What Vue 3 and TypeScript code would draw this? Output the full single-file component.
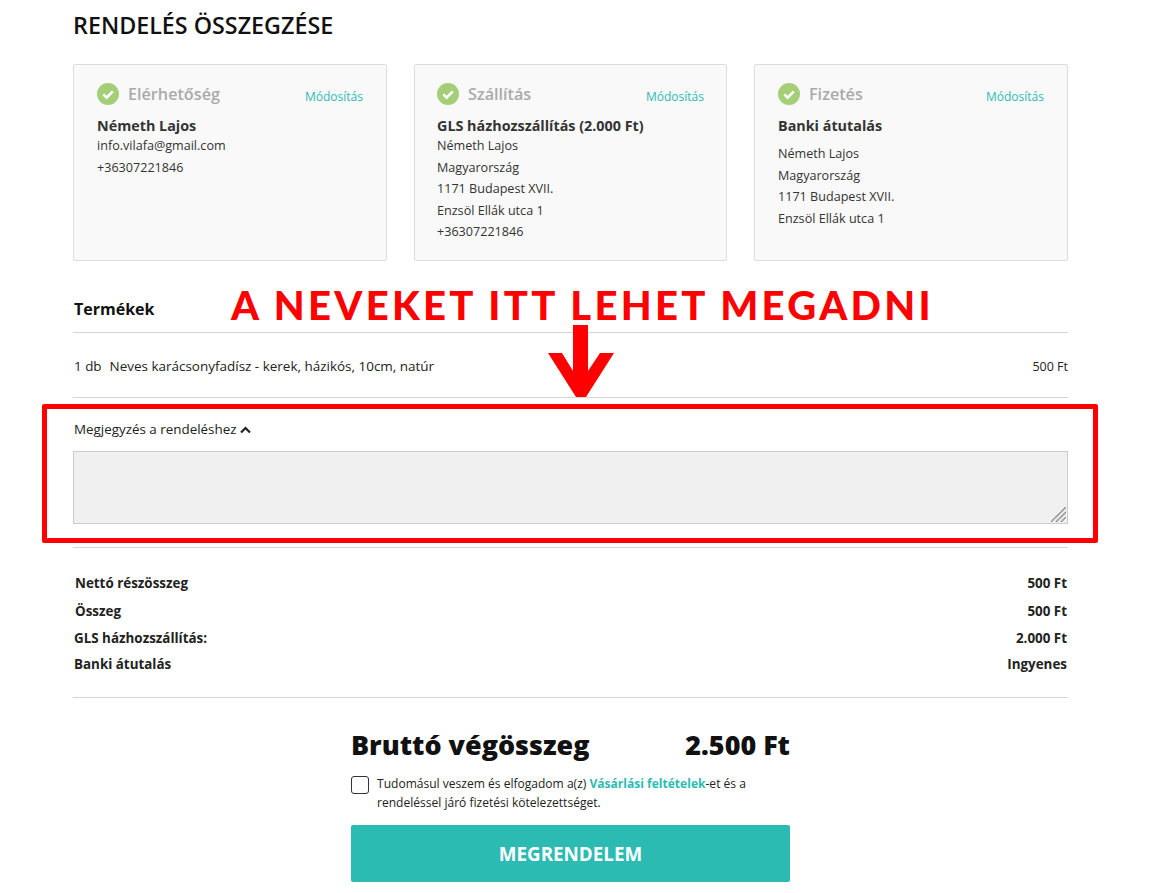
<template>
  <div class="page">
    <h1 class="title">RENDELÉS ÖSSZEGZÉSE</h1>

    <div class="cards">
      <div v-for="card in cards" :key="card.title" class="card">
        <div class="card-head">
          <svg class="check" viewBox="0 0 22 22">
            <circle cx="11" cy="11" r="11" fill="#a4cf77" />
            <path d="M6.3 11.4 9.6 14.6 15.8 8.4" fill="none" stroke="#fff" stroke-width="2.6" />
          </svg>
          <span class="card-title">{{ card.title }}</span>
          <a class="edit">Módosítás</a>
        </div>
        <div class="card-name">{{ card.name }}</div>
        <div class="card-lines" :class="{ spaced: card.spaced }">
          <div v-for="line in card.lines" :key="line">{{ line }}</div>
        </div>
      </div>
    </div>

    <h2 class="products-title">Termékek</h2>
    <div class="product">
      <span class="qty">1 db</span>
      <span class="product-name">Neves karácsonyfadísz - kerek, házikós, 10cm, natúr</span>
      <span class="product-price">500 Ft</span>
    </div>

    <div class="note">
      <div class="note-label">
        Megjegyzés a rendeléshez
        <svg class="chevron" viewBox="0 0 11 8">
          <path d="M1 6.600 5.500 2 10 6.600" fill="none" stroke="#222" stroke-width="2.200" />
        </svg>
      </div>
      <div class="note-field">
        <textarea class="note-input"></textarea>
        <svg class="grip" viewBox="0 0 15 15">
          <path d="M0 15 15 0M5 15 15 5M10 15 15 10" fill="none" stroke="#808080" stroke-width="1.600" stroke-dasharray="1.600 .5" />
        </svg>
      </div>
    </div>

    <div class="totals">
      <div v-for="row in totals" :key="row.label" class="total-row">
        <span>{{ row.label }}</span>
        <span>{{ row.value }}</span>
      </div>
    </div>

    <div class="summary">
      <div class="gross">
        <span>Bruttó végösszeg</span>
        <span>2.500 Ft</span>
      </div>
      <label class="terms">
        <span class="box"></span>
        <span>Tudomásul veszem és elfogadom a(z) <a>Vásárlási feltételek</a>-et és a rendeléssel járó fizetési kötelezettséget.</span>
      </label>
      <button class="order">MEGRENDELEM</button>
    </div>

    <!-- kézi jelölések a képernyőképen -->
    <div class="mark-text">A NEVEKET ITT LEHET MEGADNI</div>
    <svg class="mark-arrow" viewBox="0 0 66 72">
      <path d="M25 0H40V46L52 28H66L38 72H28L0 28H14L25 46Z" fill="#ff0000" />
    </svg>
    <div class="mark-box"></div>
  </div>
</template>

<script setup lang="ts">
interface Card {
  title: string
  name: string
  lines: string[]
  spaced?: boolean
}

const cards: Card[] = [
  {
    title: 'Elérhetőség',
    name: 'Németh Lajos',
    lines: ['info.vilafa@gmail.com', '+36307221846'],
  },
  {
    title: 'Szállítás',
    name: 'GLS házhozszállítás (2.000 Ft)',
    lines: ['Németh Lajos', 'Magyarország', '1171 Budapest XVII.', 'Enzsöl Ellák utca 1', '+36307221846'],
  },
  {
    title: 'Fizetés',
    name: 'Banki átutalás',
    lines: ['Németh Lajos', 'Magyarország', '1171 Budapest XVII.', 'Enzsöl Ellák utca 1'],
    spaced: true,
  },
]

const totals = [
  { label: 'Nettó részösszeg', value: '500 Ft' },
  { label: 'Összeg', value: '500 Ft' },
  { label: 'GLS házhozszállítás:', value: '2.000 Ft' },
  { label: 'Banki átutalás', value: 'Ingyenes' },
]
</script>

<style>
body {
  background: #fff;
  overflow: hidden;
}
</style>

<style scoped>
.page {
  position: relative;
  width: 995px;
  height: 893px;
  margin-left: 73px;
  font-family: "Open Sans", "Liberation Sans", sans-serif;
  font-size: 13.400px;
  color: #222;
}

.title {
  margin: 0;
  padding: 9px 0 0 0;
  font-size: 23.300px;
  line-height: 32px;
  font-weight: 600;
  color: #111;
}

.cards {
  display: grid;
  grid-template-columns: 314px 313px 314px;
  justify-content: space-between;
  margin-top: 23px;
}

.card {
  box-sizing: border-box;
  height: 197px;
  padding: 17px 23px;
  background: #f9f9f9;
  border: 1px solid #ddd;
  border-radius: 2px;
}

.card:nth-child(2) {
  padding: 17px 22px;
}

.card-head {
  display: flex;
  align-items: center;
  height: 24px;
}

.check {
  width: 22px;
  height: 22px;
  margin-right: 9px;
}

.card-title {
  font-size: 16.200px;
  font-weight: 600;
  color: #aaa;
}

.edit {
  margin-left: auto;
  padding-top: 4px;
  font-size: 12px;
  color: #2cbbb3;
}

.card-name {
  margin-top: 10px;
  font-size: 14.350px;
  line-height: 20px;
  font-weight: 700;
  color: #333;
}

.card-lines {
  margin-top: -1px;
  font-size: 12.600px;
  line-height: 21.500px;
  color: #333;
}

.card-lines.spaced {
  margin-top: 7px;
}

.products-title {
  margin: 35px 0 0 1px;
  font-size: 16px;
  line-height: 26px;
  font-weight: 700;
  color: #111;
}

.product {
  display: flex;
  align-items: center;
  height: 63px;
  margin-top: 10px;
  padding: 1px 0 0 1px;
  border-top: 1px solid #d5d5d5;
  border-bottom: 1px solid #d5d5d5;
}

.qty {
  margin-right: 8px;
}

.product-name {
  font-size: 13.480px;
}

.product-price {
  margin-left: auto;
  padding-top: 2px;
  font-size: 12.500px;
}

.note {
  height: 150px;
  box-sizing: border-box;
  padding: 22px 0 0 0;
  border-bottom: 1px solid #d5d5d5;
}

.note-label {
  display: flex;
  align-items: center;
  gap: 3px;
  height: 18px;
  padding-left: 1px;
}

.chevron {
  width: 11px;
  height: 8px;
  margin-top: 2px;
}

.note-field {
  position: relative;
  margin-top: 13px;
}

.note-input {
  display: block;
  box-sizing: border-box;
  width: 100%;
  height: 73px;
  background: #f0f0f0;
  border: 1px solid #ccc;
  outline: none;
  resize: none;
}

.grip {
  position: absolute;
  right: 2px;
  bottom: 2px;
  width: 15px;
  height: 15px;
}

.totals {
  height: 150px;
  box-sizing: border-box;
  padding-top: 22px;
  border-bottom: 1px solid #d5d5d5;
}

.total-row {
  display: flex;
  justify-content: space-between;
  height: 27px;
  line-height: 27px;
  padding: 0 1px;
  font-size: 13.400px;
  font-weight: 700;
  color: #222;
}

.total-row:nth-child(1) {
  height: 28px;
  padding-left: 2px;
}

.total-row:nth-child(2) {
  padding-left: 2px;
}

.total-row:nth-child(3) {
  height: 26px;
}

.summary {
  width: 439px;
  margin: 0 auto;
  padding-top: 27px;
}

.gross {
  display: flex;
  justify-content: space-between;
  font-size: 26.900px;
  line-height: 40px;
  font-weight: 800;
  color: #111;
}

.terms {
  display: flex;
  gap: 8px;
  margin-top: 9px;
  font-size: 12.050px;
  line-height: 19px;
  font-weight: 500;
  color: #222;
}

.terms a {
  font-weight: 700;
  color: #2cbbb3;
}

.box {
  flex: none;
  box-sizing: border-box;
  width: 18px;
  height: 18px;
  margin-top: 2px;
  background: #fff;
  border: 1px solid #333;
  border-radius: 3px;
}

.order {
  display: block;
  width: 100%;
  height: 57px;
  margin-top: 13px;
  padding: 0;
  background: #2cbbb3;
  border: 0;
  border-radius: 2px;
  font-family: inherit;
  font-size: 18.800px;
  font-weight: 700;
  color: #fff;
}

.mark-text {
  position: absolute;
  left: 158px;
  top: 280px;
  font-family: Lato, "Open Sans", sans-serif;
  font-size: 40px;
  line-height: 50px;
  font-weight: 900;
  letter-spacing: 3.300px;
  white-space: nowrap;
  color: #ff0000;
}

.mark-arrow {
  position: absolute;
  left: 475px;
  top: 325px;
  width: 66px;
  height: 72px;
}

.mark-box {
  position: absolute;
  left: -31px;
  top: 404px;
  width: 1056px;
  height: 139px;
  box-sizing: border-box;
  border: 5px solid #ff0000;
  border-radius: 2px;
}
</style>
